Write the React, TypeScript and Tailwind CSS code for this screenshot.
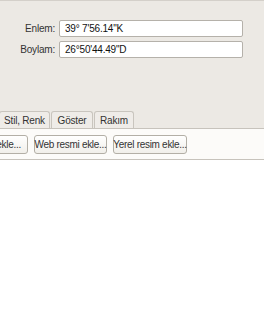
import React from 'react';

const font = { fontFamily: '"Liberation Sans", Arial, sans-serif' };

function Field({ label, value }: { label: string; value: string }) {
  return (
    <div className="flex items-center h-[17px]">
      <span className="w-[55px] pr-[4px] text-right text-[10px] tracking-[-0.2px] text-[#333]">{label}</span>
      <div className="w-[184px] h-[17px] bg-white border border-[#b5b1aa] rounded-[2px] flex items-center pl-[5px] text-[10px] tracking-[-0.2px] text-[#111]">
        {value}
      </div>
    </div>
  );
}

function Tab({ label, className }: { label: string; className: string }) {
  return (
    <div
      className={
        'h-[17px] flex items-center justify-center border border-b-0 border-[#c9c5be] rounded-t-[3px] bg-[#efece8] text-[10px] tracking-[-0.2px] text-[#333] ' +
        className
      }
    >
      {label}
    </div>
  );
}

function Btn({ label, className = '' }: { label: string; className?: string }) {
  return (
    <div
      className={
        'h-[19px] flex items-center justify-center px-[3px] shrink-0 border border-[#b3afa6] rounded-[3px] bg-gradient-to-b from-white to-[#f1efea] text-[10px] tracking-[-0.3px] text-[#333] whitespace-nowrap ' +
        className
      }
    >
      {label}
    </div>
  );
}

export default function App() {
  return (
    <div className="w-[264px] h-[320px] bg-white overflow-hidden" style={font}>
      <div className="h-[128px] bg-[#ece9e4] border-t border-[#d4d0ca] flex flex-col">
        <div className="flex flex-col gap-[4px] pt-[19px] pl-[4px]">
          <Field label="Enlem:" value={'39° 7\'56.14"K'} />
          <Field label="Boylam:" value={'26°50\'44.49"D'} />
        </div>
        <div className="mt-auto flex items-end gap-[1px] -ml-[1px]">
          <Tab label="Stil, Renk" className="w-[51px]" />
          <Tab label="Göster" className="w-[42px]" />
          <Tab label="Rakım" className="w-[40px]" />
        </div>
      </div>
      <div className="h-[32px] bg-[#fcfbf9] border-t border-b border-[#c7c3bc] flex items-center gap-[6px] overflow-hidden">
        <Btn label="Resim ekle..." className="w-[68px] -ml-[40px]" />
        <Btn label="Web resmi ekle..." className="w-[73px]" />
        <Btn label="Yerel resim ekle..." className="w-[74px]" />
      </div>
    </div>
  );
}
